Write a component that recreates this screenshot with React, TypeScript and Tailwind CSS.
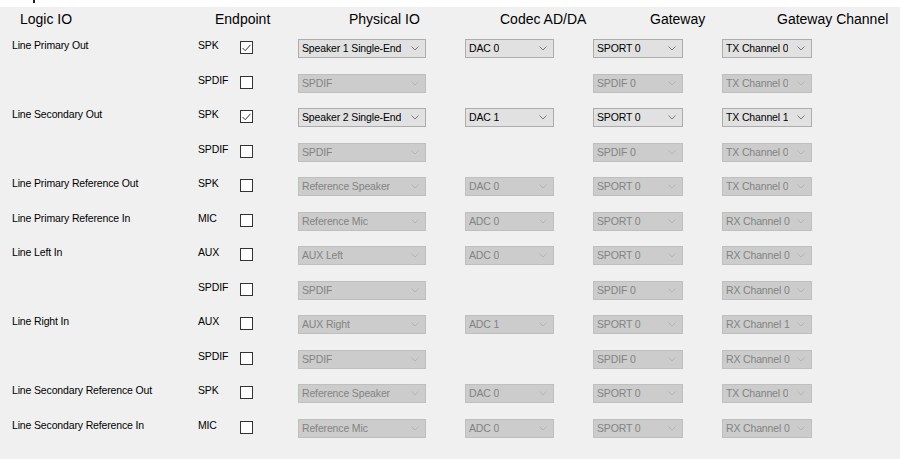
import React from "react";

type Row = {
  logic: string;
  endpoint: string;
  checked: boolean;
  physical: string;
  codec?: string;
  gateway: string;
  channel: string;
};

const ROWS: Row[] = [
  { logic: "Line Primary Out", endpoint: "SPK", checked: true, physical: "Speaker 1 Single-End", codec: "DAC 0", gateway: "SPORT 0", channel: "TX Channel 0" },
  { logic: "", endpoint: "SPDIF", checked: false, physical: "SPDIF", gateway: "SPDIF 0", channel: "TX Channel 0" },
  { logic: "Line Secondary Out", endpoint: "SPK", checked: true, physical: "Speaker 2 Single-End", codec: "DAC 1", gateway: "SPORT 0", channel: "TX Channel 1" },
  { logic: "", endpoint: "SPDIF", checked: false, physical: "SPDIF", gateway: "SPDIF 0", channel: "TX Channel 0" },
  { logic: "Line Primary Reference Out", endpoint: "SPK", checked: false, physical: "Reference Speaker", codec: "DAC 0", gateway: "SPORT 0", channel: "TX Channel 0" },
  { logic: "Line Primary Reference In", endpoint: "MIC", checked: false, physical: "Reference Mic", codec: "ADC 0", gateway: "SPORT 0", channel: "RX Channel 0" },
  { logic: "Line Left In", endpoint: "AUX", checked: false, physical: "AUX Left", codec: "ADC 0", gateway: "SPORT 0", channel: "RX Channel 0" },
  { logic: "", endpoint: "SPDIF", checked: false, physical: "SPDIF", gateway: "SPDIF 0", channel: "RX Channel 0" },
  { logic: "Line Right In", endpoint: "AUX", checked: false, physical: "AUX Right", codec: "ADC 1", gateway: "SPORT 0", channel: "RX Channel 1" },
  { logic: "", endpoint: "SPDIF", checked: false, physical: "SPDIF", gateway: "SPDIF 0", channel: "RX Channel 0" },
  { logic: "Line Secondary Reference Out", endpoint: "SPK", checked: false, physical: "Reference Speaker", codec: "DAC 0", gateway: "SPORT 0", channel: "TX Channel 0" },
  { logic: "Line Secondary Reference In", endpoint: "MIC", checked: false, physical: "Reference Mic", codec: "ADC 0", gateway: "SPORT 0", channel: "RX Channel 0" },
];

function Combo({ value, enabled, width }: { value: string; enabled: boolean; width: string }) {
  return (
    <div
      className={`flex h-[19px] items-center justify-between border pl-[3px] pr-[6px] text-[10.5px] leading-none tracking-[-0.15px] ${width} ${
        enabled ? "border-[#adadad] bg-[#e1e1e1] text-black" : "border-[#bfbfbf] bg-[#cccccc] text-[#838383]"
      }`}
    >
      <span className="truncate">{value}</span>
      <svg width="8" height="5" viewBox="0 0 8 5" className="shrink-0">
        <path d="M0.5 0.5 L4 4 L7.5 0.5" fill="none" stroke={enabled ? "#7a7a7a" : "#b4b4b4"} strokeWidth="1" />
      </svg>
    </div>
  );
}

function CheckBox({ checked }: { checked: boolean }) {
  return (
    <div className="mt-[2px] flex h-[13px] w-[13px] items-center justify-center border border-[#333333] bg-white">
      {checked && (
        <svg width="9" height="8" viewBox="0 0 9 8">
          <path d="M0.5 4 L3.2 6.7 L8.5 0.8" fill="none" stroke="#333333" strokeWidth="1" />
        </svg>
      )}
    </div>
  );
}

export default function App() {
  // only the checked SPK rows keep their combos active
  return (
    <div
      className="h-[459px] w-[900px] overflow-hidden bg-white"
      style={{ fontFamily: '"Liberation Sans", Arial, sans-serif' }}
    >
      <div className="relative h-[7px]">
        <div className="absolute left-[33px] top-0 h-[3px] w-[2px] bg-[#1c1c3c]" />
      </div>
      <div className="h-[452px] bg-[#f0f0f0]">
        <div className="flex h-[32px] pt-[4px] text-[14px] leading-[16px] text-black">
          <span className="w-[215px] pl-[20px]">Logic IO</span>
          <span className="w-[134px]">Endpoint</span>
          <span className="w-[151px]">Physical IO</span>
          <span className="w-[150px]">Codec AD/DA</span>
          <span className="w-[127px]">Gateway</span>
          <span>Gateway Channel</span>
        </div>
        <div className="grid grid-cols-[186px_42px_58px_167px_128px_129px_1fr] auto-rows-[34.5px] pl-[12px] text-[10.5px] leading-[13px] tracking-[-0.15px] text-black">
          {ROWS.map((r, i) => {
            const enabled = r.checked;
            return (
              <React.Fragment key={i}>
                <span className="whitespace-nowrap">{r.logic}</span>
                <span>{r.endpoint}</span>
                <div>
                  <CheckBox checked={r.checked} />
                </div>
                <div>
                  <Combo value={r.physical} enabled={enabled} width="w-[128px]" />
                </div>
                <div>{r.codec && <Combo value={r.codec} enabled={enabled} width="w-[89px]" />}</div>
                <div>
                  <Combo value={r.gateway} enabled={enabled} width="w-[90px]" />
                </div>
                <div>
                  <Combo value={r.channel} enabled={enabled} width="w-[90px]" />
                </div>
              </React.Fragment>
            );
          })}
        </div>
      </div>
    </div>
  );
}
